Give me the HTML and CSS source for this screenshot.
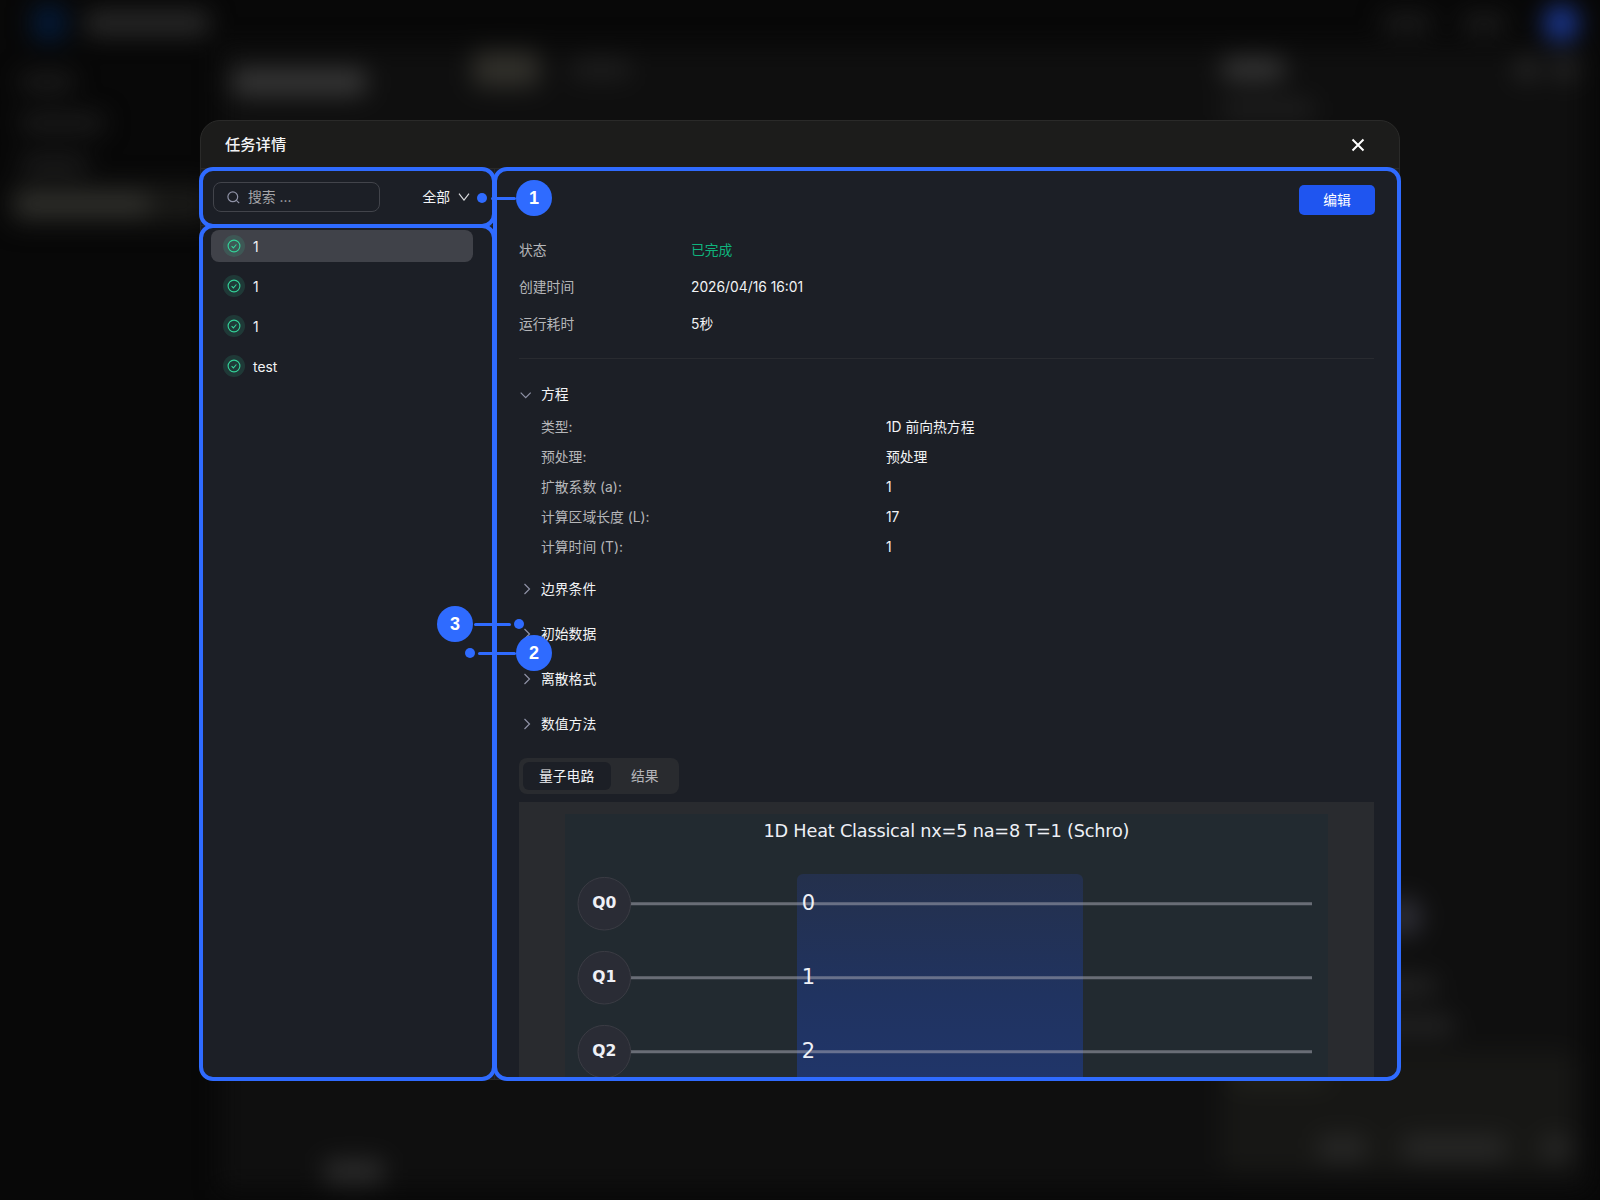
FILE: index.html
```html
<!DOCTYPE html>
<html lang="zh-CN">
<head>
  <meta charset="UTF-8" />
  <meta name="viewport" content="width=device-width, initial-scale=1" />
  <title>任务详情</title>
  <link rel="stylesheet" href="styles.css">
</head>
<body>
  <!-- blurred app behind the dialog -->
  <div class="app" aria-hidden="true">
    <div class="topbar">
      <i class="logo"></i>
      <i class="brand"></i>
      <i class="top-link"></i>
      <i class="top-link short"></i>
      <i class="avatar"></i>
    </div>
    <div class="app-body">
      <div class="nav">
        <i class="nav-item n1"></i>
        <i class="nav-item n2"></i>
        <i class="nav-item n3"></i>
        <div class="nav-active"><i></i></div>
      </div>
      <div class="workspace">
        <div class="work-head">
          <i class="work-title"></i>
          <i class="work-tab on"></i>
          <i class="work-tab"></i>
        </div>
        <i class="work-foot"></i>
      </div>
      <div class="assistant">
        <div class="assist-head"><i class="assist-title"></i><i class="tool"></i><i class="tool"></i></div>
        <i class="assist-sub"></i>
        <i class="orb"></i>
        <i class="msg"></i>
        <i class="msg wide"></i>
        <div class="chat">
          <i class="chat-hint"></i>
          <div class="chat-tools"><i></i><i class="long"></i><i class="send"></i></div>
        </div>
      </div>
    </div>
  </div>

  <div class="modal">
    <div class="modal-header">
      <h1>任务详情</h1>
      <svg class="close" width="14" height="14" viewBox="0 0 14 14"><path d="M1.5 1.5l11 11M12.5 1.5l-11 11"/></svg>
    </div>
    <div class="modal-body">
      <div class="sidebar">
        <div class="filter">
          <div class="search">
            <svg width="13" height="13" viewBox="0 0 13 13"><circle cx="5.8" cy="5.8" r="4.9"/><path d="M9.4 9.4l2.8 2.8"/></svg>
            <span>搜索 ...</span>
          </div>
          <div class="select">
            <span>全部</span>
            <svg width="12" height="8" viewBox="0 0 12 8"><path d="M1 0.7l5 6.4 5-6.4"/></svg>
          </div>
        </div>
        <div class="task-list">
          <div class="task active">
            <span class="state"><svg width="14" height="14" viewBox="0 0 14 14"><circle cx="7" cy="7" r="5.9"/><path d="M4.6 7.1l1.8 1.8 3-3.4"/></svg></span>
            <span class="name">1</span>
          </div>
          <div class="task">
            <span class="state"><svg width="14" height="14" viewBox="0 0 14 14"><circle cx="7" cy="7" r="5.9"/><path d="M4.6 7.1l1.8 1.8 3-3.4"/></svg></span>
            <span class="name">1</span>
          </div>
          <div class="task">
            <span class="state"><svg width="14" height="14" viewBox="0 0 14 14"><circle cx="7" cy="7" r="5.9"/><path d="M4.6 7.1l1.8 1.8 3-3.4"/></svg></span>
            <span class="name">1</span>
          </div>
          <div class="task">
            <span class="state"><svg width="14" height="14" viewBox="0 0 14 14"><circle cx="7" cy="7" r="5.9"/><path d="M4.6 7.1l1.8 1.8 3-3.4"/></svg></span>
            <span class="name">test</span>
          </div>
        </div>
      </div>

      <div class="detail">
        <button type="button" class="edit">编辑</button>
        <div class="info">
          <span class="label">状态</span><span class="done">已完成</span>
          <span class="label">创建时间</span><span>2026/04/16 16:01</span>
          <span class="label">运行耗时</span><span>5秒</span>
        </div>

        <div class="section first">
          <svg width="12" height="12" viewBox="0 0 12 12"><path d="M1.7 4.7l5 5 5-5"/></svg>
          <span>方程</span>
        </div>
        <div class="params">
          <span class="label">类型:</span><span>1D 前向热方程</span>
          <span class="label">预处理:</span><span>预处理</span>
          <span class="label">扩散系数 (a):</span><span>1</span>
          <span class="label">计算区域长度 (L):</span><span>17</span>
          <span class="label">计算时间 (T):</span><span>1</span>
        </div>
        <div class="section"><svg width="12" height="12" viewBox="0 0 12 12"><path d="M5.5 1l5 5-5 5"/></svg><span>边界条件</span></div>
        <div class="section"><svg width="12" height="12" viewBox="0 0 12 12"><path d="M5.5 1l5 5-5 5"/></svg><span>初始数据</span></div>
        <div class="section"><svg width="12" height="12" viewBox="0 0 12 12"><path d="M5.5 1l5 5-5 5"/></svg><span>离散格式</span></div>
        <div class="section"><svg width="12" height="12" viewBox="0 0 12 12"><path d="M5.5 1l5 5-5 5"/></svg><span>数值方法</span></div>

        <div class="tabs">
          <span class="tab on">量子电路</span>
          <span class="tab">结果</span>
        </div>

        <svg class="circuit" width="855" height="300" viewBox="0 0 855 300">
          <defs>
            <linearGradient id="block" x1="0" y1="0" x2="0" y2="1">
              <stop offset="0" stop-color="#24304c"/>
              <stop offset="0.5" stop-color="#203360"/>
              <stop offset="1" stop-color="#20366d"/>
            </linearGradient>
          </defs>
          <rect class="board" x="46" y="12" width="763" height="300"/>
          <text class="circuit-title" x="427.5" y="35" textLength="366">1D Heat Classical nx=5 na=8 T=1 (Schro)</text>
          <rect x="278" y="72" width="286" height="240" rx="6" fill="url(#block)"/>
          <path class="wire" d="M112 101.7H793M112 175.7H793M112 249.7H793"/>
          <circle cx="85.3" cy="101.7" r="26.3"/>
          <circle cx="85.3" cy="175.7" r="26.3"/>
          <circle cx="85.3" cy="249.7" r="26.3"/>
          <text class="qubit" x="85.3" y="106.3">Q0</text>
          <text class="qubit" x="85.3" y="180.3">Q1</text>
          <text class="qubit" x="85.3" y="254.3">Q2</text>
          <text class="port" x="289.5" y="107.5">0</text>
          <text class="port" x="289.5" y="181.5">1</text>
          <text class="port" x="289.5" y="255.5">2</text>
        </svg>
      </div>
    </div>
  </div>

  <!-- guide frames and callouts -->
  <div class="frame frame-filter"></div>
  <div class="frame frame-list"></div>
  <div class="frame frame-detail"></div>
  <div class="callout c1"><i class="dot"></i><i class="line"></i><b>1</b></div>
  <div class="callout c2"><i class="dot"></i><i class="line"></i><b>2</b></div>
  <div class="callout c3"><b>3</b><i class="line"></i><i class="dot"></i></div>
</body>
</html>
```
FILE: styles.css
```css
* {
  margin: 0;
  padding: 0;
  box-sizing: border-box;
}
body {
  position: relative;
  width: 1600px;
  height: 1200px;
  overflow: hidden;
  background: #080808;
  color: #f2f3f5;
  font-family: Inter, "Noto Sans CJK SC", sans-serif;
  font-size: 13.8px;
  line-height: 20px;
}
svg {
  display: block;
  fill: none;
  flex: none;
}

/* app behind */
.app {
  height: 1200px;
  display: flex;
  flex-direction: column;
  filter: blur(12px);
}
.app i {
  display: block;
  flex: none;
  border-radius: 6px;
  background: #1e1e1e;
}
.topbar {
  height: 46px;
  display: flex;
  align-items: center;
  padding: 0 22px 0 33px;
}
.app .logo {
  width: 32px;
  height: 36px;
  background: #041a38;
}
.app .brand {
  width: 124px;
  height: 24px;
  margin: 0 auto 0 20px;
  background: #2a2a2a;
}
.app .top-link {
  width: 50px;
  height: 18px;
  margin-right: 30px;
}
.app .top-link.short {
  width: 44px;
  margin-right: 38px;
}
.app .avatar {
  width: 34px;
  height: 36px;
  border-radius: 50%;
  background: #1c3a98;
}
.app-body {
  flex: 1;
  display: flex;
  padding: 0 12px 10px 0;
}
.nav {
  width: 220px;
  padding: 27px 0 0 10px;
}
.app .nav-item {
  height: 18px;
  margin: 0 0 23px 10px;
  background: #1d1d1d;
}
.app .n1 {
  width: 54px;
}
.app .n2 {
  width: 84px;
}
.app .n3 {
  width: 68px;
  margin-bottom: 11px;
}
.nav-active {
  width: 200px;
  height: 40px;
  padding: 10px 6px;
  border-radius: 8px;
  background: #191917;
}
.nav-active i {
  width: 134px;
  height: 20px;
  background: #33332f;
}
.workspace {
  width: 992px;
  padding: 6px 0 0 12px;
  background: #0f0f0f;
  display: flex;
  flex-direction: column;
}
.work-head {
  display: flex;
}
.app .work-title {
  width: 134px;
  height: 26px;
  margin: 17px 107px 0 0;
  background: #383838;
}
.app .work-tab {
  width: 58px;
  height: 20px;
  margin: 7px 0 0 33px;
}
.app .work-tab.on {
  width: 66px;
  height: 36px;
  margin: -1px 0 0;
  background: #31302b;
}
.app .work-foot {
  width: 60px;
  height: 24px;
  margin: auto 0 6px 92px;
  background: #2c2c2c;
}
.assistant {
  flex: 1;
  padding: 12px 12px 18px 10px;
  background: #0f0f0f;
  display: flex;
  flex-direction: column;
}
.assist-head {
  display: flex;
  align-items: center;
  gap: 16px;
}
.app .assist-title {
  width: 62px;
  height: 22px;
  margin-right: auto;
  background: #373737;
}
.app .tool {
  width: 22px;
  height: 22px;
  background: #282828;
}
.app .assist-sub {
  width: 92px;
  height: 20px;
  margin-top: 19px;
}
.app .orb {
  width: 36px;
  height: 40px;
  margin: 778px 0 0 164px;
  border-radius: 50%;
  background: #2e2e36;
}
.app .msg {
  width: 64px;
  height: 20px;
  margin: 39px 0 0 150px;
  background: #232323;
}
.app .msg.wide {
  width: 82px;
  margin-top: 20px;
}
.chat {
  margin-top: auto;
  height: 120px;
  padding: 18px 6px 12px 10px;
  border-radius: 12px;
  background: #171715;
  display: flex;
  flex-direction: column;
  justify-content: space-between;
}
.app .chat-hint {
  width: 96px;
  height: 16px;
  background: #22231e;
}
.chat-tools {
  display: flex;
  justify-content: flex-end;
  gap: 36px;
}
.chat-tools i {
  width: 48px;
  height: 24px;
  background: #282827;
}
.chat-tools .long {
  width: 104px;
}
.chat-tools .send {
  width: 28px;
}

/* dialog */
.modal {
  position: absolute;
  left: 200px;
  top: 120px;
  width: 1200px;
  height: 960px;
  overflow: hidden;
  display: flex;
  flex-direction: column;
  border: 1px solid #2a2a29;
  border-radius: 20px 20px 10px 10px;
  background: #1c1c1b;
}
.modal-header {
  height: 48px;
  display: flex;
  align-items: center;
  justify-content: space-between;
  padding: 0 34px 0 24px;
  border-bottom: 1px solid #2a2a29;
}
.modal-header h1 {
  font-size: 15.3px;
  font-weight: 500;
}
.close {
  stroke: #fff;
  stroke-width: 2;
}
.modal-body {
  flex: 1;
  min-height: 0;
  display: flex;
  background: #1c1f26;
}
.sidebar {
  width: 294px;
  border-right: 1px solid #2a2b2f;
}
.filter {
  height: 57px;
  display: flex;
  align-items: flex-start;
  justify-content: space-between;
  padding: 13px 24px 0 12px;
  border-bottom: 1px solid #2a2b2f;
}
.search {
  width: 167px;
  height: 30px;
  display: flex;
  align-items: center;
  gap: 8px;
  padding-left: 13px;
  border: 1px solid #42444b;
  border-radius: 8px;
  color: #a5a6a9;
}
.search svg {
  stroke: #8f92a6;
  stroke-width: 1.2;
}
.select {
  height: 30px;
  display: flex;
  align-items: center;
  gap: 8px;
}
.select svg {
  stroke: #d8d9dc;
  stroke-width: 1.2;
}
.task-list {
  display: flex;
  flex-direction: column;
  gap: 8px;
  padding: 4px 21px 0 10px;
}
.task {
  height: 32px;
  display: flex;
  align-items: center;
  gap: 8px;
  padding-left: 12px;
  border-radius: 8px;
}
.task.active {
  background: #404249;
}
.name {
  padding-top: 2px;
}
.state {
  width: 22px;
  height: 22px;
  display: flex;
  align-items: center;
  justify-content: center;
  border-radius: 50%;
  background: rgba(52, 211, 153, 0.15);
}
.state svg {
  stroke: #34d399;
  stroke-width: 1.1;
}
.detail {
  flex: 1;
  display: flex;
  flex-direction: column;
  align-items: flex-start;
  padding: 16px 25px 0 24px;
  overflow: hidden;
}
.edit {
  align-self: flex-end;
  width: 76px;
  height: 30px;
  margin-right: -1px;
  flex: none;
  border: none;
  border-radius: 5px;
  background: #1f55f0;
  color: #fff;
  font: inherit;
}
.info {
  width: 100%;
  display: grid;
  grid-template-columns: 172px 1fr;
  grid-auto-rows: 37px;
  align-items: center;
  padding: 16px 0 16px;
  border-bottom: 1px solid #292b30;
}
.label {
  color: #b5b6b9;
}
.done {
  color: #0fb37d;
}
.section {
  height: 45px;
  flex: none;
  display: flex;
  align-items: center;
  gap: 10px;
}
.section.first {
  height: 36px;
  margin-top: 17px;
}
.section svg {
  stroke: #8f92a6;
  stroke-width: 1.2;
  overflow: visible;
}
.params {
  width: 100%;
  display: grid;
  grid-template-columns: 345px 1fr;
  grid-auto-rows: 30px;
  align-items: center;
  padding: 0 0 4px 22px;
}
.tabs {
  height: 36px;
  flex: none;
  display: flex;
  margin: 12px 0 8px;
  padding: 4px;
  border-radius: 8px;
  background: #292b2f;
}
.tab {
  display: flex;
  align-items: center;
  padding: 0 16px 0 20px;
  color: #b5b6b9;
}
.tab.on {
  width: 88px;
  padding: 0 16px;
  border-radius: 6px;
  background: #1c1f26;
  color: #f2f3f5;
}
.circuit {
  background: #292b2f;
}
.board {
  fill: #222a30;
}
.circuit text {
  font-family: "DejaVu Sans", sans-serif;
  text-anchor: middle;
  fill: #eef0f6;
}
.circuit .circuit-title {
  font-size: 17.7px;
}
.circuit .qubit {
  font-size: 15.6px;
  font-weight: bold;
}
.circuit .port {
  font-size: 21px;
}
.circuit circle {
  fill: #2a2c35;
  stroke: #3b3c44;
}
.wire {
  stroke: rgba(170, 170, 182, 0.52);
  stroke-width: 3;
}

/* annotations */
.frame {
  position: absolute;
  border: 4px solid #2f6bff;
  border-radius: 14px;
}
.frame-filter {
  left: 199px;
  top: 167px;
  width: 297px;
  height: 61px;
}
.frame-list {
  left: 199px;
  top: 224px;
  width: 297px;
  height: 857px;
}
.frame-detail {
  left: 493px;
  top: 167px;
  width: 908px;
  height: 914px;
}
.callout {
  position: absolute;
  height: 36px;
  display: flex;
  align-items: center;
}
.callout b {
  width: 36px;
  height: 36px;
  border-radius: 50%;
  background: #2f6bff;
  color: #fff;
  font: bold 18px/36px "Liberation Sans", sans-serif;
  text-align: center;
}
.dot {
  width: 10px;
  height: 10px;
  border-radius: 50%;
  background: #2f6bff;
}
.line {
  width: 37px;
  height: 3px;
  border-radius: 2px;
  background: #2f6bff;
}
.c1 {
  left: 477px;
  top: 180px;
}
.c1 .line {
  width: 25px;
  margin-left: 4px;
}
.c2 {
  left: 465px;
  top: 635px;
}
.c2 .line {
  width: 38px;
  margin-left: 3px;
}
.c3 {
  left: 437px;
  top: 606px;
}
.c3 .line {
  margin: 0 3px 0 1px;
}
```
